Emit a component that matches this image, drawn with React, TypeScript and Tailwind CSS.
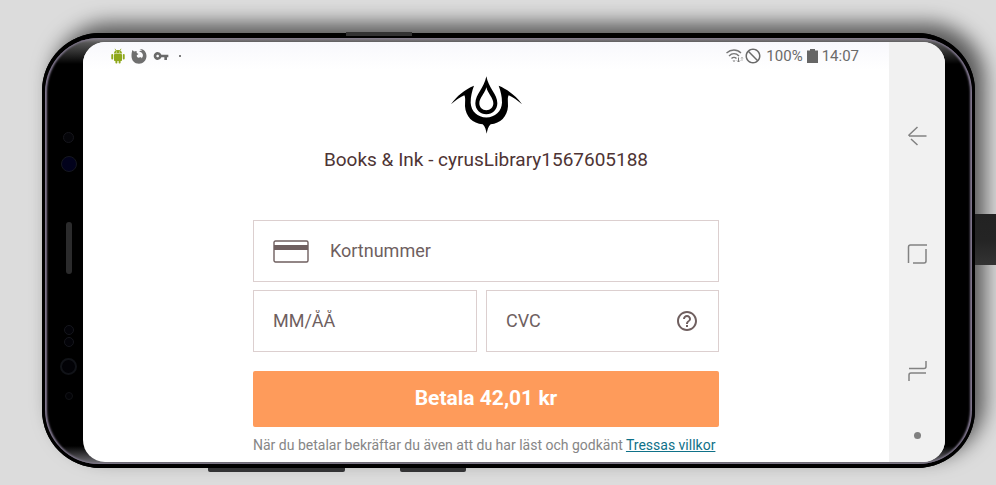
import React from "react";
import { MdVpnKey, MdBlock, MdHelpOutline } from "react-icons/md";

function Logo() {
  return (
    <svg viewBox="44 24 213 173" className="h-[58px] w-[71px]" role="img" aria-label="Books & Ink">
      <path d="M44 108C62 84 84 65 113 53C107 70 103 84 103 104C104 130 124 148 150 148C176 148 196 130 197 104C197 84 193 70 187 53C216 65 239 84 257 108C243 96 231 87 217 81C213 88 215 100 215 114C213 145 192 166 163 168C156 174 153 185 151 197C149 185 146 174 139 168C109 166 88 145 86 114C86 100 88 88 84 81C70 87 58 96 44 108Z" />
      <path fillRule="evenodd" d="M150 24C156 58 183 78 183 105C183 124 168 138 150 138C132 138 117 124 117 105C117 78 144 58 150 24ZM150 57C145 77 129 89 129 105C129 117 138 126 150 126C162 126 171 117 171 105C171 89 155 77 150 57Z" />
    </svg>
  );
}

function CardIcon() {
  return (
    <svg viewBox="0 0 36 23" className="h-[23px] w-9 shrink-0" aria-hidden="true">
      <rect x="1" y="1" width="34" height="21" rx="1.5" fill="none" stroke="#6f5f5f" strokeWidth="1.4" />
      <rect x="1" y="5" width="34" height="5" fill="#6f5f5f" />
    </svg>
  );
}

function AndroidIcon() {
  return (
    <svg viewBox="0 0 14 16" className="h-4 w-[14px]" fill="#8fa81c" aria-hidden="true">
      <path d="M3 5.500C3 3.500 4.500 2 7 2C9.500 2 11 3.500 11 5.500Z" />
      <path d="M4 0.800L5.200 2.800M10 0.800L8.800 2.800" stroke="#8fa81c" strokeWidth="0.800" />
      <rect x="3" y="6" width="8" height="7" rx="0.800" />
      <rect x="0.300" y="6" width="1.900" height="5.500" rx="0.900" />
      <rect x="11.800" y="6" width="1.900" height="5.500" rx="0.900" />
      <rect x="4.400" y="11" width="2" height="4.500" rx="0.900" />
      <rect x="7.600" y="11" width="2" height="4.500" rx="0.900" />
      <circle cx="5.400" cy="4" r="0.500" fill="#fff" />
      <circle cx="8.600" cy="4" r="0.500" fill="#fff" />
    </svg>
  );
}

function FirefoxIcon() {
  return (
    <svg viewBox="0 0 16 16" className="size-4" fill="#6f6f6f" aria-hidden="true">
      <path d="M1.500 2L3 3.500L5.500 3L5.800 5L7.500 6L5.800 7.200C5.500 9 7 10 8.500 9.500C10 9 11 9.500 10 10.500C12.500 9.500 12.500 6 10.500 4.500L8 3.200C9 2.500 10 2.500 11 3C10.500 2 9.500 1.300 8.500 1C12.500 0.500 15.500 4 15.500 8C15.500 12.500 12 15.700 8 15.700C3.500 15.700 0.500 12.500 0.500 8C0.500 5.500 0.800 3.500 1.500 2Z" />
    </svg>
  );
}

function BatteryIcon() {
  return (
    <svg viewBox="0 0 11 14" className="mx-[4px] h-[14px] w-[11px]" fill="#666" aria-hidden="true">
      <path d="M3 0H8V1.500H11V14H0V1.500H3Z" />
    </svg>
  );
}

function WifiIcon() {
  return (
    <svg viewBox="0 0 18 16" className="h-4 w-[18px]" fill="none" stroke="#777" strokeWidth="1.4" aria-hidden="true">
      <path d="M0.500 5C5 1 11 1 15 5M3 8C6 5 10 5 13 8M5.500 10.500C7 9 9 9 10.500 10.500" />
      <path d="M6.500 12.500L8 14L9.500 12.500Z" fill="#777" stroke="none" />
      <path d="M12.500 9.500V14M11 12.500L12.500 14L14 12.500" strokeWidth="1" />
      <path d="M16 13V9M15 10.500L16 9L17 10.500" strokeWidth="1" stroke="#bbb" />
    </svg>
  );
}

function StatusBar() {
  return (
    <div className="flex h-[28px] w-full items-center justify-between bg-linear-to-b from-[#f8f8fc] to-white pr-[30px] pl-[28px] text-[#6a6a6a]">
      <div className="flex items-center gap-[6px]">
        <AndroidIcon />
        <FirefoxIcon />
        <MdVpnKey className="size-4" />
        <span className="ml-1 size-[2px] rounded-full bg-[#555]" />
      </div>
      <div className="flex items-center text-[15px]">
        <WifiIcon />
        <MdBlock className="mr-1 size-[18px] -scale-x-100" />
        <span>100%</span>
        <BatteryIcon />
        <span>14:07</span>
      </div>
    </div>
  );
}

function Sensors() {
  return (
    <div className="flex w-[34px] shrink-0 flex-col items-center pt-[90px] pl-[5px]">
      <span className="size-[11px] rounded-full border border-[#16161c] bg-[#050509]" />
      <span className="mt-[13px] size-4 rounded-full border border-[#15171f] bg-[#02021c]" />
      <span className="mt-[50px] h-[52px] w-[6px] rounded-full bg-[#2b2b2c]" />
      <span className="mt-[51px] size-[10px] rounded-full border border-[#15161c] bg-[#030308]" />
      <span className="mt-[2px] size-[10px] rounded-full border border-[#15161c] bg-[#030308]" />
      <span className="mt-[11px] size-[17px] rounded-full border-2 border-[#111318] bg-[#020206]" />
      <span className="mt-[17px] size-2 rounded-full border border-[#111216] bg-[#030306]" />
    </div>
  );
}

function PaymentForm() {
  const field = "flex h-[62px] items-center border border-[#dccfcf] px-[19px]";
  const input =
    "w-full min-w-0 bg-transparent text-lg text-[#6f5f5f] outline-none placeholder:text-[#6f5f5f] placeholder:opacity-100";
  return (
    <form className="mt-[46px] flex w-full max-w-[466px] flex-col" onSubmit={(e) => e.preventDefault()}>
      <label className={field}>
        <CardIcon />
        <input className={input + " ml-[21px]"} aria-label="Kortnummer" placeholder="Kortnummer" inputMode="numeric" />
      </label>
      <div className="mt-[8px] flex gap-[9px]">
        <label className={field + " w-[224px]"}>
          <input className={input} aria-label="MM/ÅÅ" placeholder="MM/ÅÅ" inputMode="numeric" />
        </label>
        <label className={field + " flex-1"}>
          <input className={input} aria-label="CVC" placeholder="CVC" inputMode="numeric" />
          <button type="button" aria-label="CVC" className="shrink-0 text-[#6f5f5f]">
            <MdHelpOutline className="size-6" />
          </button>
        </label>
      </div>
      <button type="submit" className="mt-[19px] h-14 rounded-[2px] bg-[#fe9b5b] text-[21px] font-bold text-white">
        Betala 42,01 kr
      </button>
      <p className="mt-2 text-sm whitespace-nowrap text-[#868686]">
        När du betalar bekräftar du även att du har läst och godkänt{" "}
        <a href="#villkor" className="text-[#0f7189] underline">
          Tressas villkor
        </a>
      </p>
    </form>
  );
}

function NavBar() {
  return (
    <nav className="flex w-14 shrink-0 flex-col items-center bg-[#f1f1f1] pt-[84px] text-[#828282]">
      <button type="button" aria-label="Tillbaka">
        <svg viewBox="0 0 20 20" className="size-5" fill="none" stroke="currentColor" strokeWidth="1.5">
          <path d="M19.500 10H2M10.500 1L2 9V10M4 13L10.500 19" />
        </svg>
      </button>
      <button type="button" aria-label="Hem" className="mt-[98px]">
        <svg viewBox="0 0 20 20" className="size-5" fill="none" stroke="currentColor" strokeWidth="1.500">
          <path d="M1.500 19V3Q1.500 1 3.500 1H20M19 5V17Q19 19 17 19H6" />
        </svg>
      </button>
      <button type="button" aria-label="Senaste" className="mt-[97px]">
        <svg viewBox="0 0 20 20" className="size-5" fill="none" stroke="currentColor" strokeWidth="1.500">
          <path d="M19 0V5.500Q19 7.500 17 7.500H2M19 12H4Q2 12 2 14V20" />
        </svg>
      </button>
      <span className="mt-[51px] size-[7px] rounded-full bg-[#808080]" />
    </nav>
  );
}

export default function App() {
  return (
    <div className="relative min-h-screen overflow-hidden bg-[#dcdcdc] pt-[33px] pr-[21px] pb-[17px] pl-[42px] font-['Roboto',sans-serif]">
      <div className="relative rounded-[58px] bg-black shadow-[10px_-10px_20px_0px_rgba(0,0,0,0.6)]">
        <div className="absolute top-[181px] left-full h-[51px] w-6 bg-linear-to-b from-[#222] via-[#242424] to-[#333]" />
        <div className="absolute -top-px left-[304px] h-1 w-[66px] bg-[#333]" />
        <div className="absolute top-full left-[166px] h-[4px] w-[137px] rounded-b-[2px] bg-[#333335]" />
        <div className="absolute top-full left-[358px] h-[4px] w-[66px] rounded-b-[2px] bg-[#333335]" />
        <div className="rounded-[58px] border-x-[3px] border-t-[5px] border-b-[4px] border-black">
          <div className="flex rounded-[54px] bg-[linear-gradient(#8a868c,#555_5px,#000_26px,#000_calc(100%-18px),#77767c)] pt-[4px] pr-[4px] pb-[2px] pl-[4px] shadow-[inset_2px_0_2px_0_#857b93,inset_-2px_0_2px_0_#857b93]">
            <Sensors />
            <div className="flex min-w-0 flex-1 overflow-hidden rounded-[22px] bg-white">
              <main className="flex min-w-0 flex-1 flex-col items-center pb-[7px]">
                <StatusBar />
                <div className="mt-[6px]">
                  <Logo />
                </div>
                <h1 className="mt-3 text-[19px] leading-7 text-[#4e3434]">Books &amp; Ink - cyrusLibrary1567605188</h1>
                <PaymentForm />
              </main>
              <NavBar />
            </div>
            <div className="w-[23px] shrink-0" />
          </div>
        </div>
      </div>
    </div>
  );
}
